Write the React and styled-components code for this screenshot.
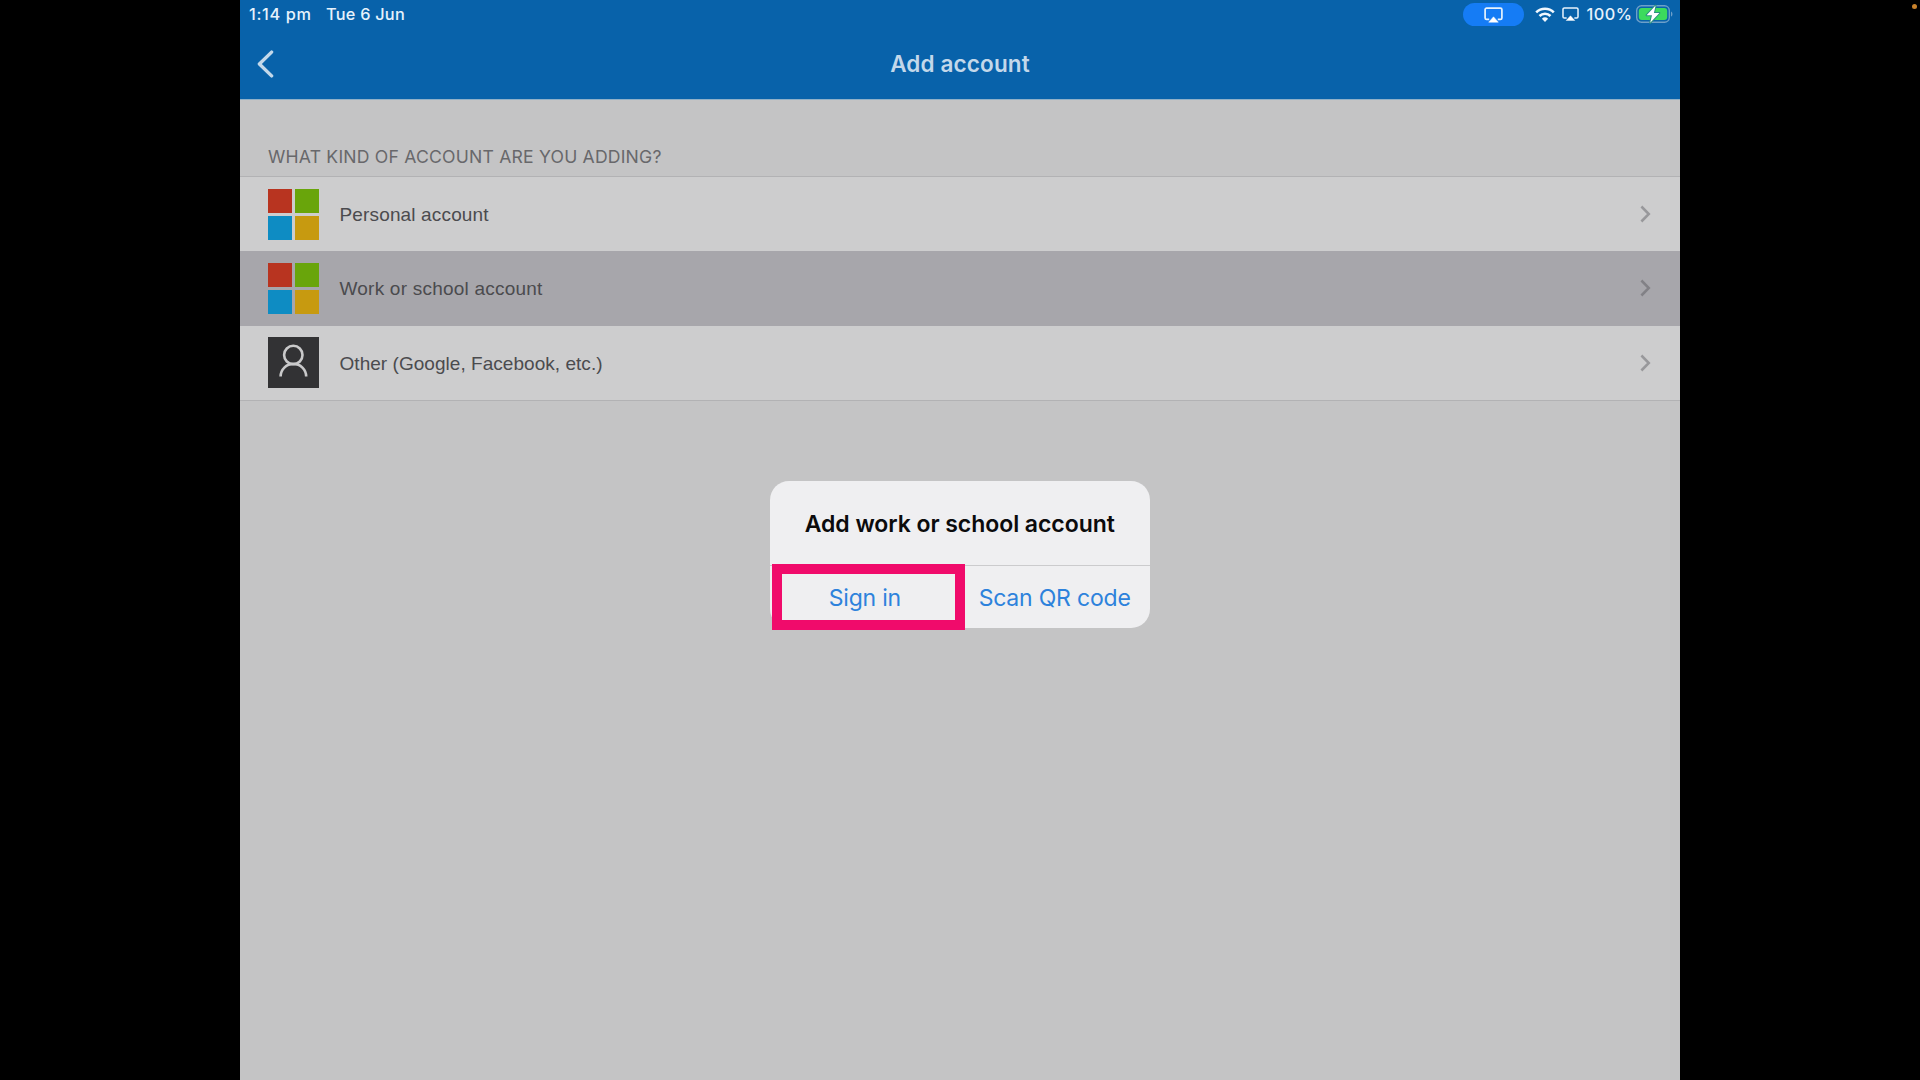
import React from "react";
import styled, { createGlobalStyle } from "styled-components";

const Global = createGlobalStyle`
  *, *::before, *::after { box-sizing: border-box; }
  html, body { margin: 0; padding: 0; background: #000; overflow: hidden; }
  button { font: inherit; border: 0; background: none; padding: 0; margin: 0; }
  svg { display: block; flex: none; }
`;

const Stage = styled.div`
  position: relative;
  display: flex;
  justify-content: center;
  width: 1920px;
  height: 1080px;
  background: #000;
  font-family: Inter, "Liberation Sans", sans-serif;
`;

const Tablet = styled.main`
  display: flex;
  flex-direction: column;
  width: 1440px;
  height: 1080px;
  background: #c4c4c5;
`;

const Header = styled.header`
  display: flex;
  flex-direction: column;
  height: 100px;
  background: #0862aa;
  border-bottom: 1px solid #8fb0c8;
`;

const StatusBar = styled.div`
  display: flex;
  align-items: center;
  justify-content: space-between;
  height: 28px;
  padding: 0 7px 0 9px;
  color: #e6f2fc;
  font-size: 16.3px;
  font-weight: 500;
  line-height: 28px;
`;

const StatusGroup = styled.div`
  display: flex;
  align-items: center;
  height: 28px;
`;

const StatusText = styled.span`
  width: ${(p) => p.$width}px;
  letter-spacing: ${(p) => p.$spacing || 0}px;
  white-space: nowrap;
`;

const CastPill = styled.div`
  display: flex;
  align-items: center;
  justify-content: center;
  width: 61px;
  height: 23px;
  margin-right: 11px;
  padding-top: 1px;
  border-radius: 12px;
  background: #157cf5;
`;

const NavBar = styled.nav`
  display: grid;
  grid-template-columns: 60px 1fr 60px;
  align-items: center;
  height: 71px;
`;

const BackButton = styled.button`
  display: flex;
  align-items: center;
  padding-left: 16px;
  height: 40px;
`;

const NavTitle = styled.h1`
  margin: 0;
  text-align: center;
  color: #c3d8ea;
  font-size: 22.5px;
  font-weight: 600;
  line-height: 30px;
  letter-spacing: 0.15px;
`;

const SectionTitle = styled.h2`
  height: 76px;
  margin: 0;
  padding: 46px 0 0 28px;
  color: #68686b;
  font-size: 17.6px;
  font-weight: 400;
  line-height: 22px;
  letter-spacing: 0.2px;
`;

const List = styled.div`
  display: flex;
  flex-direction: column;
  height: 225px;
  border-top: 1px solid #b2b2b4;
  border-bottom: 1px solid #b2b2b4;
`;

const Row = styled.div`
  display: flex;
  flex: 1;
  align-items: center;
  padding: 0 28px;
  background: ${(p) => (p.$selected ? "#a7a6ab" : "#cdcdce")};
`;

const RowLabel = styled.span`
  flex: 1;
  padding: 2px 0 0 20.5px;
  color: #4b4b4e;
  font-family: "Liberation Sans", Arial, sans-serif;
  font-size: 19px;
  line-height: 24px;
  letter-spacing: ${(p) => p.$spacing}px;
`;

const Tiles = styled.div`
  display: grid;
  grid-template-columns: 24px 24px;
  grid-template-rows: 24px 24px;
  gap: 3px;
`;

const Tile = styled.span`
  background: ${(p) => p.$color};
`;

const PersonBox = styled.div`
  width: 51px;
  height: 51px;
  background: #323234;
`;

const Dialog = styled.section`
  position: absolute;
  left: 770px;
  top: 481px;
  display: flex;
  flex-direction: column;
  width: 379.5px;
  height: 147px;
  border-radius: 19px;
  background: #efeff1;
`;

const DialogTitle = styled.h3`
  height: 84px;
  margin: 0;
  text-align: center;
  color: #0b0b0c;
  font-size: 23px;
  font-weight: 600;
  line-height: 86px;
  letter-spacing: -0.05px;
`;

const DialogActions = styled.div`
  display: grid;
  grid-template-columns: 1fr 1fr;
  flex: 1;
  border-top: 1px solid #cbcbcd;
`;

const DialogButton = styled.button`
  color: #2d82dc;
  font-size: 23px;
  line-height: 62px;
  padding-top: 1px;
  letter-spacing: -0.2px;
  white-space: nowrap;
`;

const Highlight = styled.div`
  position: absolute;
  left: 772px;
  top: 564px;
  width: 193px;
  height: 66px;
  border: 10px solid #f00b6b;
`;

const RecordingDot = styled.i`
  position: absolute;
  left: 1912px;
  top: 4px;
  width: 5px;
  height: 5px;
  border-radius: 50%;
  background: #c9822c;
`;

const AirPlay = ({ width }) => (
  <svg width={width} height={(width * 16) / 19} viewBox="0 0 19 16">
    <path
      d="M5.2 12.4H2.6A1.5 1.5 0 0 1 1.1 10.9V2.6A1.5 1.5 0 0 1 2.6 1.1H16.4A1.5 1.5 0 0 1 17.9 2.6V10.9A1.5 1.5 0 0 1 16.4 12.4H13.8"
      fill="none"
      stroke="#e6f2fc"
      strokeWidth="1.7"
    />
    <path d="M9.5 9.8 14.3 15.2H4.7Z" fill="#fff" stroke="#fff" strokeWidth=".5" strokeLinejoin="round" />
  </svg>
);

const Wifi = () => (
  <svg width="20" height="15" viewBox="0 0 20 15">
    <g fill="none" stroke="#f2f8fe" strokeWidth="2.6">
      <path d="M1.2 5.4a12.6 12.6 0 0 1 17.6 0" />
      <path d="M4.5 9a7.8 7.8 0 0 1 11 0" />
    </g>
    <path d="M10 14.9 6.9 11.7a4.5 4.5 0 0 1 6.2 0Z" fill="#f2f8fe" />
  </svg>
);

const Battery = () => (
  <svg width="37" height="20" viewBox="0 0 37 20">
    <rect x=".7" y="1.8" width="32.6" height="16.4" rx="4.8" fill="none" stroke="#6d9fc9" strokeWidth="1.4" />
    <rect x="2.8" y="3.9" width="28.4" height="12.2" rx="3" fill="#3cdb5d" />
    <path d="M35 7.4c1.9.8 1.9 4.4 0 5.2Z" fill="#6d9fc9" />
    <path
      d="M19.6 1.6 10.6 11.3H16L14.2 18.8 23.4 8.9H17.9Z"
      fill="#fff"
      stroke="#2c8f80"
      strokeWidth="2"
      paintOrder="stroke"
      strokeLinejoin="round"
    />
  </svg>
);

const BackChevron = () => (
  <svg width="18" height="28" viewBox="0 0 18 28">
    <path d="M15.6 2.1 3.4 14 15.6 25.9" fill="none" stroke="#c3d8ea" strokeWidth="3.4" strokeLinecap="round" strokeLinejoin="round" />
  </svg>
);

const Chevron = ({ color }) => (
  <svg width="12" height="18" viewBox="0 0 12 18">
    <path d="M1.4 1.5 8.8 9 1.4 16.5" fill="none" stroke={color} strokeWidth="2.5" />
  </svg>
);

const Person = () => (
  <svg width="51" height="51" viewBox="0 0 51 51">
    <g fill="none" stroke="#c9c9ca" strokeWidth="2.6">
      <circle cx="25.3" cy="18" r="9.2" />
      <path d="M12.6 39.5a12.8 12.6 0 0 1 25.6 0" />
    </g>
  </svg>
);

const WindowsLogo = () => (
  <Tiles>
    {["#b83420", "#69a50b", "#0e8cc3", "#c79a10"].map((c) => (
      <Tile key={c} $color={c} />
    ))}
  </Tiles>
);

const OtherIcon = () => (
  <PersonBox>
    <Person />
  </PersonBox>
);

const accounts = [
  { label: "Personal account", Icon: WindowsLogo, spacing: 0.15 },
  { label: "Work or school account", Icon: WindowsLogo, spacing: 0.22, selected: true },
  { label: "Other (Google, Facebook, etc.)", Icon: OtherIcon, spacing: 0.04 },
];

export default function App() {
  return (
    <Stage>
      <Global />
      <Tablet>
        <Header>
          <StatusBar>
            <StatusGroup>
              <StatusText $width={77} $spacing={0.65}>1:14 pm</StatusText>
              <StatusText $width={90} $spacing={0.25}>Tue 6 Jun</StatusText>
            </StatusGroup>
            <StatusGroup>
              <CastPill>
                <AirPlay width={19} />
              </CastPill>
              <Wifi />
              <StatusText $width={7} />
              <AirPlay width={17} />
              <StatusText $width={7.5} />
              <StatusText $width={49.5} $spacing={0.5}>100%</StatusText>
              <Battery />
            </StatusGroup>
          </StatusBar>
          <NavBar>
            <BackButton aria-label="Back">
              <BackChevron />
            </BackButton>
            <NavTitle>Add account</NavTitle>
          </NavBar>
        </Header>
        <SectionTitle>WHAT KIND OF ACCOUNT ARE YOU ADDING?</SectionTitle>
        <List>
          {accounts.map(({ label, Icon, spacing, selected }) => (
            <Row key={label} $selected={selected}>
              <Icon />
              <RowLabel $spacing={spacing}>{label}</RowLabel>
              <Chevron color={selected ? "#828186" : "#98989b"} />
            </Row>
          ))}
        </List>
      </Tablet>
      <Dialog>
        <DialogTitle>Add work or school account</DialogTitle>
        <DialogActions>
          <DialogButton>Sign in</DialogButton>
          <DialogButton>Scan QR code</DialogButton>
        </DialogActions>
      </Dialog>
      <Highlight />
      <RecordingDot />
    </Stage>
  );
}
